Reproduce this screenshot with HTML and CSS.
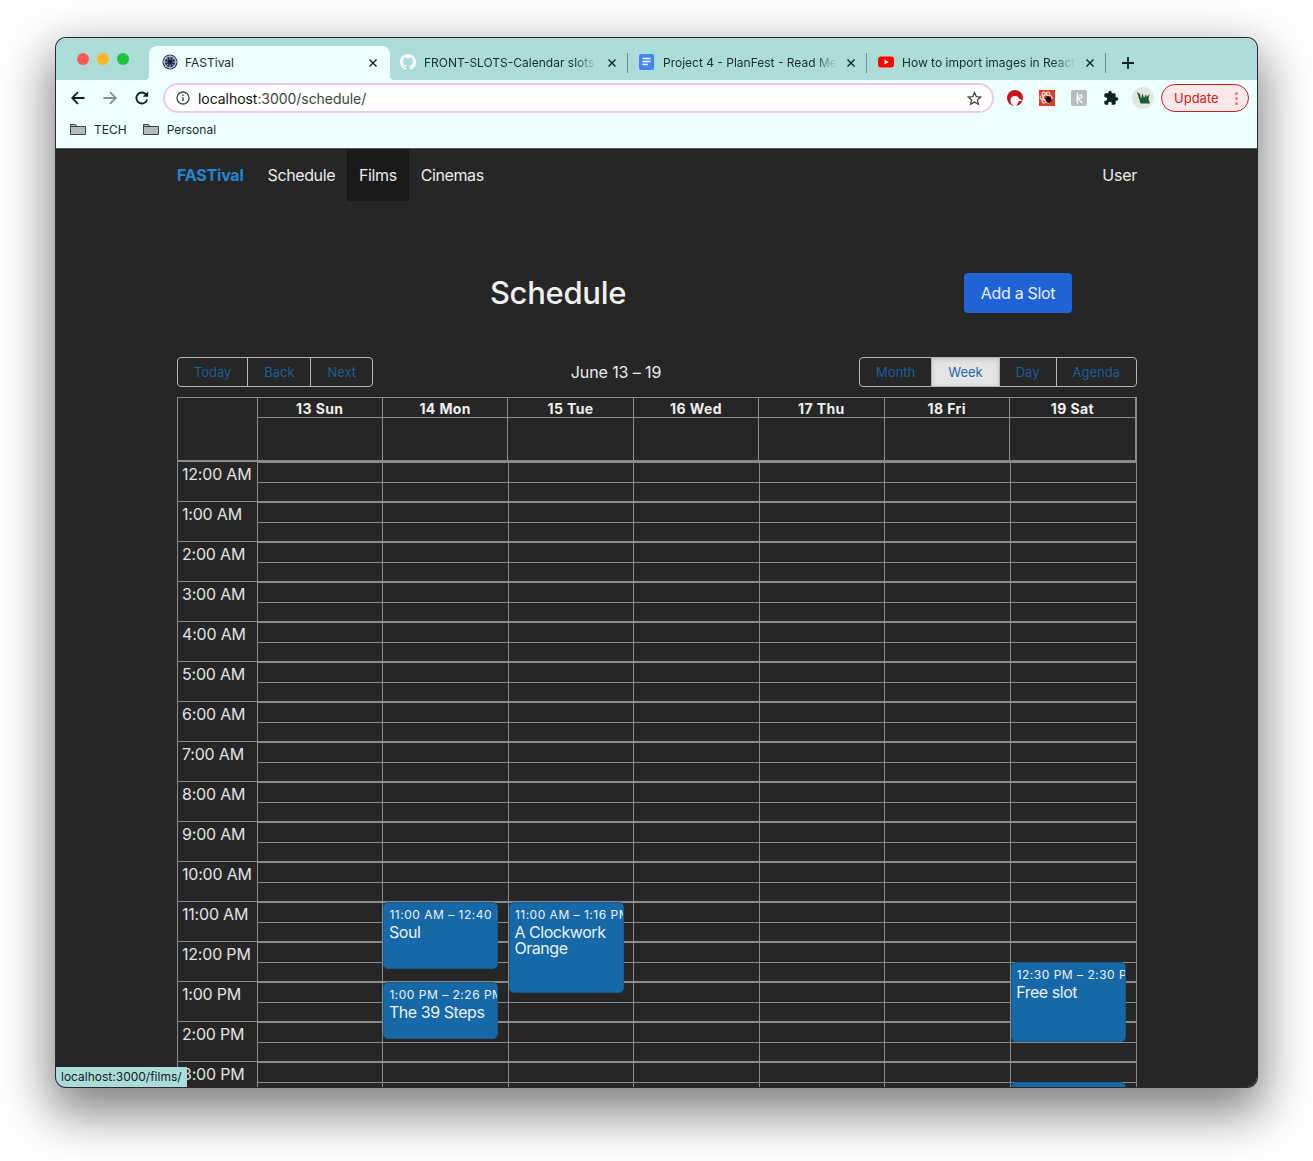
FILE: index.html
```html
<!DOCTYPE html>
<html lang="en">
<head>
    <meta charset="UTF-8">
    <meta name="viewport" content="width=device-width, initial-scale=1.0">
    <title>FASTival</title>
    <link rel="stylesheet" href="styles.css">
</head>
<body>
    <div class="window">
        <!-- browser tabs -->
        <div class="tabstrip">
            <div class="lights">
                <span class="light light-red"></span>
                <span class="light light-yellow"></span>
                <span class="light light-green"></span>
            </div>
            <div class="tab tab-active">
                <svg class="favicon" viewBox="0 0 16 16"><circle cx="8" cy="8" r="7.5" fill="#2b3350"/><circle cx="8" cy="8" r="5.8" fill="none" stroke="#b9c4dc" stroke-width="1.2"/><path d="M8 1v14M1 8h14M3 3l10 10M13 3L3 13" stroke="#b9c4dc" stroke-width=".8"/><circle cx="8" cy="8" r="2.4" fill="#1c2038"/></svg>
                <span class="tab-title">FASTival</span>
                <svg class="tab-close" viewBox="0 0 8 8"><path d="M.5.5l7 7M7.500.5l-7 7"/></svg>
            </div>
            <div class="tab">
                <svg class="favicon" viewBox="0 0 16 16"><path fill="#fff" d="M8 0C3.58 0 0 3.58 0 8c0 3.54 2.29 6.53 5.47 7.59.4.07.55-.17.55-.38 0-.19-.01-.82-.01-1.49-2.01.37-2.53-.49-2.69-.94-.09-.23-.48-.94-.82-1.13-.28-.15-.68-.52-.01-.53.63-.01 1.08.58 1.23.82.72 1.21 1.87.87 2.33.66.07-.52.28-.87.51-1.07-1.78-.2-3.64-.89-3.64-3.95 0-.87.31-1.59.82-2.15-.08-.2-.36-1.02.08-2.12 0 0 .67-.21 2.2.82.64-.18 1.32-.27 2-.27.68 0 1.36.09 2 .27 1.53-1.04 2.2-.82 2.2-.82.44 1.1.16 1.92.08 2.12.51.56.82 1.27.82 2.15 0 3.07-1.87 3.75-3.65 3.95.29.25.54.73.54 1.48 0 1.07-.01 1.93-.01 2.2 0 .21.15.46.55.38A8.013 8.013 0 0016 8c0-4.42-3.58-8-8-8z"/></svg>
                <span class="tab-title tab-fade">FRONT-SLOTS-Calendar slots on</span>
                <svg class="tab-close" viewBox="0 0 8 8"><path d="M.5.5l7 7M7.500.5l-7 7"/></svg>
            </div>
            <div class="tab">
                <svg class="favicon" viewBox="0 0 16 16"><rect width="15" height="16" rx="2" fill="#4285f4"/><path d="M3.500 4.500h8M3.500 7.500h8M3.500 10.500h5.500" stroke="#fff" stroke-width="1.5"/></svg>
                <span class="tab-title tab-fade">Project 4 - PlanFest - Read Me</span>
                <svg class="tab-close" viewBox="0 0 8 8"><path d="M.5.5l7 7M7.500.5l-7 7"/></svg>
            </div>
            <div class="tab">
                <svg class="favicon" viewBox="0 0 16 16"><rect y="2.5" width="16" height="11" rx="3" fill="#f00"/><path d="M6.5 5.6v4.8L10.6 8z" fill="#fff"/></svg>
                <span class="tab-title tab-fade">How to import images in Reactjs</span>
                <svg class="tab-close" viewBox="0 0 8 8"><path d="M.5.5l7 7M7.500.5l-7 7"/></svg>
            </div>
            <svg class="tab-new" viewBox="0 0 14 14"><path d="M7 1v12M1 7h12" stroke="#10201f" stroke-width="1.8"/></svg>
        </div>

        <!-- address bar -->
        <div class="toolbar">
            <svg class="tool-btn" viewBox="0 0 16 16"><path d="M14.5 8h-12M8 2.2L2.200 8 8 13.800" fill="none" stroke="#10201f" stroke-width="1.8"/></svg>
            <svg class="tool-btn" viewBox="0 0 16 16"><path d="M1.5 8h12M8 2.2L13.800 8 8 13.800" fill="none" stroke="#87928f" stroke-width="1.8"/></svg>
            <svg class="tool-btn" viewBox="0 0 16 16"><path d="M13.2 9.5A5.500 5.500 0 1 1 12 4.300" fill="none" stroke="#10201f" stroke-width="1.8"/><path d="M14.2 1.4v5.400H8.800z" fill="#10201f"/></svg>
            <div class="omnibox">
                <svg class="omni-info" viewBox="0 0 14 14"><circle cx="7" cy="7" r="6" fill="none" stroke="#444" stroke-width="1.3"/><path d="M7 6.200v4M7 3.600v1.500" stroke="#444" stroke-width="1.4"/></svg>
                <span class="omni-url">localhost<span class="omni-path">:3000/schedule/</span></span>
                <svg class="omni-star" viewBox="0 0 16 16"><path d="M8 1.600l1.900 4.300 4.700.5-3.500 3.100 1 4.600L8 11.800l-4.100 2.300 1-4.600-3.500-3.100 4.700-.5z" fill="none" stroke="#444" stroke-width="1.4"/></svg>
            </div>
            <div class="extensions">
                <svg class="ext" viewBox="0 0 16 16"><circle cx="8" cy="8" r="8" fill="#c8131b"/><path d="M3.500 10c0-2.500 2.200-4 4.500-4 2 0 3.200 1 4.200 2.800l3.300 1.700c-.7.500-2 .6-3 .5-.6 0-1 .4-1.300 1L9.500 16H7c-2-.7-3.500-3.500-3.500-6z" fill="#fff"/></svg>
                <svg class="ext" viewBox="0 0 16 16"><rect width="16" height="16" fill="#d8402c"/><g fill="none" stroke="#fbd9cf" stroke-width="1.200"><ellipse cx="7" cy="7.500" rx="6" ry="2.500"/><ellipse cx="7" cy="7.500" rx="6" ry="2.500" transform="rotate(60 7 7.500)"/><ellipse cx="7" cy="7.500" rx="6" ry="2.500" transform="rotate(120 7 7.500)"/></g><ellipse cx="9.500" cy="9.500" rx="2.800" ry="3.400" fill="#1c0f0c" transform="rotate(-30 9.500 9.500)"/></svg>
                <svg class="ext" viewBox="0 0 16 16"><rect width="16" height="16" rx="2" fill="#b8bcbb"/><path d="M6.500 2.500c-.5 3-.5 7 0 11M6.500 8.500c1-3.500 4.500-4.500 4.500-2.500S8 8.800 7 9c2 0 2.500 4 4.500 3.500" fill="none" stroke="#fff" stroke-width="1.200"/></svg>
                <svg class="ext" viewBox="0 0 24 24"><path fill="#0d2322" d="M20.500 11H19V7c0-1.100-.9-2-2-2h-4V3.500C13 2.120 11.880 1 10.500 1S8 2.120 8 3.500V5H4c-1.100 0-1.990.9-1.990 2v3.800H3.500c1.490 0 2.700 1.210 2.700 2.700s-1.210 2.700-2.700 2.700H2V20c0 1.100.9 2 2 2h3.800v-1.500c0-1.490 1.210-2.700 2.700-2.700 1.490 0 2.700 1.210 2.700 2.700V22H17c1.100 0 2-.9 2-2v-4h1.500c1.380 0 2.500-1.120 2.500-2.500S21.880 11 20.500 11z"/></svg>
                <svg class="ext ext-avatar" viewBox="0 0 22 22"><circle cx="11" cy="11" r="11" fill="#e4e6e4"/><path d="M5 5l3 2 1 5 1.500-6 1.500 5 2-4 .5 3 3-3-1 5 1.500 4.500H8.500z" fill="#1f5c34"/></svg>
            </div>
            <div class="update-btn">
                <span>Update</span>
                <span class="update-dots"><i></i><i></i><i></i></span>
            </div>
        </div>

        <!-- bookmarks -->
        <div class="bookmarks">
            <div class="bookmark">
                <svg class="folder" viewBox="0 0 16 13"><path d="M.5 11.500v-10h5l1.500 2h8.500v8z" fill="#b4bcb9" stroke="#3c4544"/><path d="M.5 3.500h15" stroke="#3c4544"/></svg>
                TECH
            </div>
            <div class="bookmark">
                <svg class="folder" viewBox="0 0 16 13"><path d="M.5 11.500v-10h5l1.500 2h8.500v8z" fill="#b4bcb9" stroke="#3c4544"/><path d="M.5 3.500h15" stroke="#3c4544"/></svg>
                Personal
            </div>
        </div>

        <!-- the page itself -->
        <div class="page">
            <div class="container">
                <nav class="navbar">
                    <a class="brand">FASTival</a>
                    <a class="nav-link">Schedule</a>
                    <a class="nav-link nav-link-hover">Films</a>
                    <a class="nav-link">Cinemas</a>
                    <a class="nav-user">User</a>
                </nav>

                <div class="heading-row">
                    <h1 class="heading">Schedule</h1>
                    <button class="add-btn">Add a Slot</button>
                </div>

                <div class="cal-toolbar">
                    <div class="btn-group btn-group-nav">
                        <button>Today</button>
                        <button>Back</button>
                        <button>Next</button>
                    </div>
                    <span class="cal-label">June 13 – 19</span>
                    <div class="btn-group">
                        <button>Month</button>
                        <button class="btn-active">Week</button>
                        <button>Day</button>
                        <button>Agenda</button>
                    </div>
                </div>

                <div class="calendar">
                    <div class="cal-header">
                        <div class="head-gutter"></div>
                        <div class="head-col"><div class="head-date">13 Sun</div></div>
                        <div class="head-col"><div class="head-date">14 Mon</div></div>
                        <div class="head-col"><div class="head-date">15 Tue</div></div>
                        <div class="head-col"><div class="head-date">16 Wed</div></div>
                        <div class="head-col"><div class="head-date">17 Thu</div></div>
                        <div class="head-col"><div class="head-date">18 Fri</div></div>
                        <div class="head-col"><div class="head-date">19 Sat</div></div>
                    </div>
                    <div class="cal-body">
                        <div class="gutter">
                            <div class="hour">12:00 AM</div>
                            <div class="hour">1:00 AM</div>
                            <div class="hour">2:00 AM</div>
                            <div class="hour">3:00 AM</div>
                            <div class="hour">4:00 AM</div>
                            <div class="hour">5:00 AM</div>
                            <div class="hour">6:00 AM</div>
                            <div class="hour">7:00 AM</div>
                            <div class="hour">8:00 AM</div>
                            <div class="hour">9:00 AM</div>
                            <div class="hour">10:00 AM</div>
                            <div class="hour">11:00 AM</div>
                            <div class="hour">12:00 PM</div>
                            <div class="hour">1:00 PM</div>
                            <div class="hour">2:00 PM</div>
                            <div class="hour">3:00 PM</div>
                        </div>
                        <div class="day"></div>
                        <div class="day">
                            <div class="event" style="top: 440px; height: 67px;">
                                <div class="event-time">11:00 AM – 12:40 PM</div>
                                <div class="event-title">Soul</div>
                            </div>
                            <div class="event" style="top: 520px; height: 57px;">
                                <div class="event-time">1:00 PM – 2:26 PM</div>
                                <div class="event-title">The 39 Steps</div>
                            </div>
                        </div>
                        <div class="day">
                            <div class="event" style="top: 440px; height: 91px;">
                                <div class="event-time">11:00 AM – 1:16 PM</div>
                                <div class="event-title">A Clockwork Orange</div>
                            </div>
                        </div>
                        <div class="day"></div>
                        <div class="day"></div>
                        <div class="day"></div>
                        <div class="day">
                            <div class="event" style="top: 500px; height: 80px;">
                                <div class="event-time">12:30 PM – 2:30 PM</div>
                                <div class="event-title">Free slot</div>
                            </div>
                            <div class="event" style="top: 620px; height: 80px;"></div>
                        </div>
                    </div>
                </div>
            </div>
            <div class="status-bubble">localhost:3000/films/</div>
        </div>
    </div>
</body>
</html>
```

FILE: styles.css
```css
/* page and mac window */
html, body {
    height: 100%;
    overflow: hidden;
}

body {
    margin: 0;
    background-color: #fff;
    font-family: Inter, "Liberation Sans", sans-serif;
}

.window {
    display: flex;
    flex-direction: column;
    width: 1201px;
    height: 1049px;
    margin: 38px 0 0 56px;
    border-radius: 10px;
    overflow: hidden;
    box-shadow: 0 0 0 1px #2a2a2a, 0 20px 50px 6px rgba(0, 0, 0, 0.5);
}

/* tabs */
.tabstrip {
    position: relative;
    display: flex;
    align-items: flex-end;
    height: 42px;
    padding-left: 93px;
    background-color: #acdcd9;
    flex-shrink: 0;
}

.lights {
    position: absolute;
    top: 15px;
    left: 21px;
    display: flex;
    gap: 8px;
}

.light {
    width: 12px;
    height: 12px;
    border-radius: 50%;
}

.light-red { background-color: #f95a55; }
.light-yellow { background-color: #feb724; }
.light-green { background-color: #1fc43d; }

.tab {
    position: relative;
    display: flex;
    align-items: center;
    width: 239px;
    height: 34px;
    padding: 0 13px 2px 10px;
    box-sizing: border-box;
    font-size: 12px;
    color: #1a2b2a;
}

.tab::after {
    content: "";
    position: absolute;
    top: 7px;
    right: 1px;
    width: 1px;
    height: 20px;
    background-color: #6f8d8b;
}

.tab-active {
    width: 241px;
    padding-left: 13px;
    background-color: #edffff;
    border-radius: 8px 8px 0 0;
}

/* flared bottom corners of the active tab */
.tab-active::before,
.tab-active::after {
    content: "";
    position: absolute;
    top: auto;
    bottom: 0;
    width: 5px;
    height: 5px;
}

.tab-active::before {
    left: -5px;
    background: radial-gradient(circle at 0 0, transparent 5px, #edffff 5.5px);
}

.tab-active::after {
    right: -5px;
    background: radial-gradient(circle at 100% 0, transparent 5px, #edffff 5.5px);
}

.favicon {
    width: 16px;
    height: 16px;
    margin-right: 8px;
    flex-shrink: 0;
}

.tab-active .favicon {
    margin-right: 7px;
}

.tab-title {
    flex: 1;
    overflow: hidden;
    white-space: nowrap;
    margin-right: 7px;
}

.tab-fade {
    -webkit-mask-image: linear-gradient(to right, #000 85%, transparent 98%);
    mask-image: linear-gradient(to right, #000 85%, transparent 98%);
}

.tab-close {
    width: 8px;
    height: 8px;
    margin-top: 1px;
    fill: none;
    stroke: #10201f;
    stroke-width: 1.4;
    flex-shrink: 0;
}

.tab-new {
    width: 14px;
    height: 14px;
    margin: 0 0 10px 14px;
}

/* address bar */
.toolbar {
    display: flex;
    align-items: center;
    height: 36px;
    padding-left: 14px;
    background-color: #edffff;
    flex-shrink: 0;
}

.tool-btn {
    width: 16px;
    height: 16px;
    margin-right: 16px;
}

.omnibox {
    display: flex;
    align-items: center;
    width: 831px;
    height: 30px;
    margin-left: -3px;
    padding: 0 10px 0 11px;
    box-sizing: border-box;
    background-color: #fff;
    border: 2px solid #eec8f0;
    border-radius: 15px;
}

.omni-info {
    width: 14px;
    height: 14px;
    margin-right: 8px;
}

.omni-url {
    flex: 1;
    font-size: 14px;
    letter-spacing: -0.05px;
    color: #111;
}

.omni-path {
    color: #3c4543;
}

.omni-star {
    width: 15px;
    height: 15px;
}

.extensions {
    display: flex;
    align-items: center;
    gap: 16px;
    margin-left: 13px;
}

.ext {
    width: 16px;
    height: 16px;
}

.ext-avatar {
    width: 22px;
    height: 22px;
    margin: 0 -3px;
}

.update-btn {
    display: flex;
    align-items: center;
    justify-content: space-between;
    width: 88px;
    height: 28px;
    margin-left: 10px;
    padding: 0 10px 0 12px;
    box-sizing: border-box;
    font-size: 13px;
    color: #c5221f;
    background-color: #fbe9e9;
    border: 1px solid #c5221f;
    border-radius: 14px;
}

.update-dots {
    display: flex;
    flex-direction: column;
    gap: 2px;
}

.update-dots i {
    width: 3px;
    height: 3px;
    border-radius: 50%;
    background-color: #ee7b74;
}

/* bookmarks */
.bookmarks {
    display: flex;
    align-items: center;
    gap: 16px;
    height: 33px;
    padding: 0 0 6px 14px;
    box-sizing: border-box;
    background-color: #edffff;
    border-bottom: 1px solid #555;
    flex-shrink: 0;
}

.bookmark {
    display: flex;
    align-items: center;
    font-size: 12px;
    color: #1a2b2a;
}

.folder {
    width: 16px;
    height: 13px;
    margin-right: 8px;
}

/* app */
.page {
    position: relative;
    flex: 1;
    overflow: hidden;
    background-color: #262626;
    color: #e6e6e6;
}

.container {
    width: 960px;
    margin-left: 121px;
}

.navbar {
    display: flex;
    align-items: center;
    height: 52px;
}

.brand {
    margin-right: 12px;
    font-size: 16px;
    font-weight: 700;
    letter-spacing: -0.2px;
    color: #2186d2;
}

.nav-link {
    padding: 14px 12px;
    font-size: 16px;
    line-height: 24px;
    letter-spacing: -0.4px;
    color: #ececec;
}

.nav-link-hover {
    background-color: #1a1a1a;
}

.nav-user {
    margin-left: auto;
    font-size: 16px;
    letter-spacing: -0.25px;
    color: #ececec;
}

.heading-row {
    display: flex;
    align-items: center;
    gap: 25px;
    margin: 72px 0 44px;
}

.heading {
    width: 762px;
    margin: 0;
    font-size: 31px;
    line-height: 38px;
    font-weight: 500;
    letter-spacing: -0.3px;
    text-align: center;
    color: #f0f0f0;
}

.add-btn {
    width: 108px;
    height: 40px;
    font-family: inherit;
    font-size: 16px;
    letter-spacing: -0.3px;
    color: #e8f0ff;
    background-color: #1f63d6;
    border: none;
    border-radius: 4px;
}

/* calendar toolbar */
.cal-toolbar {
    display: flex;
    align-items: center;
    justify-content: space-between;
    margin-bottom: 10px;
}

.cal-label {
    font-size: 16px;
    letter-spacing: -0.1px;
    color: #ececec;
}

.btn-group {
    display: flex;
    height: 30px;
    box-sizing: border-box;
    border: 1px solid #b5b5b5;
    border-radius: 4px;
    overflow: hidden;
}

.btn-group button {
    padding: 0 16px;
    font-family: inherit;
    font-size: 13px;
    color: #1d5f98;
    background: transparent;
    border: none;
    border-left: 1px solid #b5b5b5;
}

.btn-group button:first-child {
    border-left: none;
}

.btn-group-nav button {
    letter-spacing: -0.05px;
}

.btn-group .btn-active {
    color: #1f6aa8;
    background-color: #e3e3e3;
    box-shadow: inset 0 2px 4px rgba(0, 0, 0, 0.12);
}

/* calendar grid */
.cal-header {
    display: flex;
    height: 65px;
    box-sizing: border-box;
    border: 1px solid #8b8b8b;
    border-right-width: 2px;
    border-bottom-width: 2px;
}

.head-gutter {
    width: 78.6px;
    flex-shrink: 0;
}

.head-col {
    flex: 0 0 125.4px;
    box-sizing: border-box;
    border-left: 1px solid #8b8b8b;
}

.head-col:last-child {
    flex: 1;
}

.head-date {
    height: 19px;
    font-size: 14px;
    font-weight: 700;
    line-height: 22px;
    letter-spacing: 0.4px;
    text-align: center;
    color: #f0f0f0;
    border-bottom: 1px solid #8b8b8b;
}

.cal-body {
    display: flex;
    box-sizing: border-box;
    border-right: 1px solid #8b8b8b;
}

.gutter {
    width: 80px;
    flex-shrink: 0;
    box-sizing: border-box;
    border-left: 1px solid #8b8b8b;
}

.hour {
    height: 40px;
    padding: 0 4px;
    box-sizing: border-box;
    font-size: 16px;
    line-height: 25px;
    letter-spacing: -0.2px;
    white-space: nowrap;
    color: #e2e2e2;
    border-bottom: 1px solid #8b8b8b;
}

/* hour and half hour lines drawn on the day column */
.day {
    position: relative;
    flex: 0 0 125.45px;
    box-sizing: border-box;
    height: 640px;
    background-image: linear-gradient(to bottom, #8b8b8b 1px, transparent 1px, transparent 20px, #8b8b8b 20px, #8b8b8b 21px, transparent 21px, transparent 39px, #8b8b8b 39px);
    background-size: 100% 40px;
    border-left: 1px solid #8b8b8b;
}

.day:last-child {
    flex: 1;
}

.event {
    position: absolute;
    left: 0;
    width: 115px;
    padding: 3px 0 0 5px;
    box-sizing: border-box;
    overflow: hidden;
    color: #eaf2f8;
    background-color: #1768a6;
    border: 1px solid #175a8e;
    border-radius: 5px;
}

.event-time {
    font-size: 12px;
    line-height: 18px;
    letter-spacing: 0.5px;
    white-space: nowrap;
}

.event-title {
    margin-left: -0.5px;
    font-size: 16px;
    line-height: 16px;
    letter-spacing: -0.45px;
}

.status-bubble {
    position: absolute;
    left: 0;
    bottom: 0;
    width: 131px;
    height: 20px;
    padding-left: 5px;
    box-sizing: border-box;
    font-size: 12px;
    line-height: 20px;
    white-space: nowrap;
    color: #10201f;
    background-color: #acdcd9;
}
```
